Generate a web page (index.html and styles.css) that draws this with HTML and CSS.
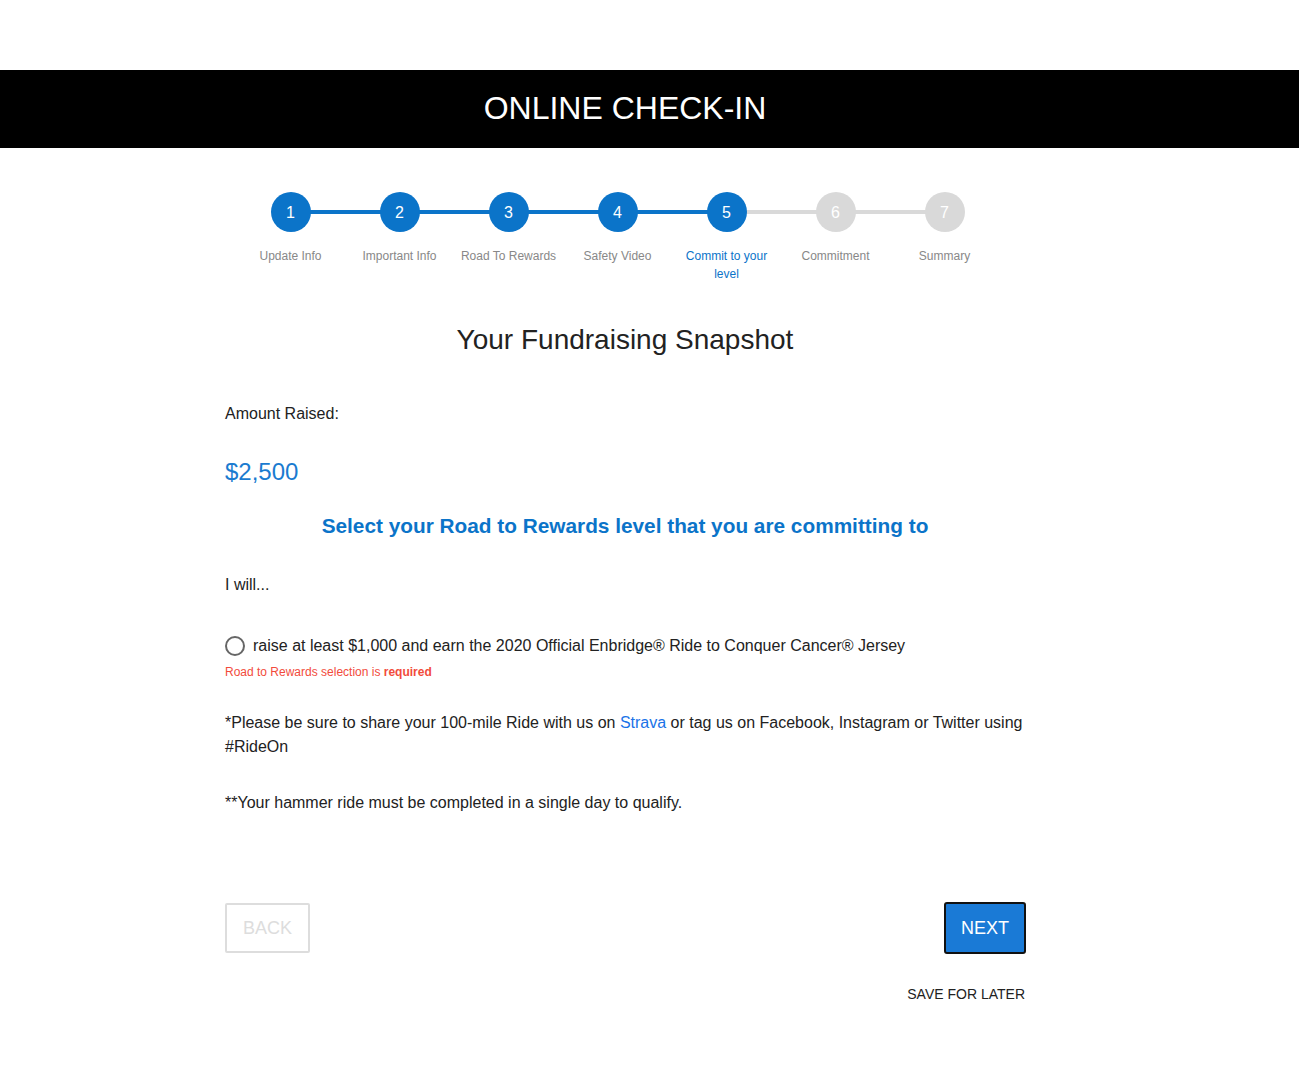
FILE: index.html
```html
<!DOCTYPE html>
<html lang="en">
<head>
<meta charset="utf-8">
<title>Online Check-In</title>
<link rel="stylesheet" href="styles.css">
</head>
<body>
<div class="topspace"></div>
<header class="banner">
  <div class="banner-inner"><h1 class="banner-title">ONLINE CHECK-IN</h1></div>
</header>
<main class="page">
  <div class="content">
    <ol class="steps">
      <li class="step done"><span class="dot">1</span><span class="label">Update Info</span></li>
      <li class="step done"><span class="dot">2</span><span class="label">Important Info</span></li>
      <li class="step done"><span class="dot">3</span><span class="label">Road To Rewards</span></li>
      <li class="step done"><span class="dot">4</span><span class="label">Safety Video</span></li>
      <li class="step current"><span class="dot">5</span><span class="label">Commit to your level</span></li>
      <li class="step todo"><span class="dot">6</span><span class="label">Commitment</span></li>
      <li class="step todo last"><span class="dot">7</span><span class="label">Summary</span></li>
    </ol>

    <h2 class="snapshot-title">Your Fundraising Snapshot</h2>

    <p class="amount-label">Amount Raised:</p>
    <p class="amount">$2,500</p>

    <h3 class="select-title">Select your Road to Rewards level that you are committing to</h3>

    <p class="will">I will...</p>

    <label class="radio-row">
      <span class="radio"></span>
      <span>raise at least $1,000 and earn the 2020 Official Enbridge® Ride to Conquer Cancer® Jersey</span>
    </label>
    <p class="error">Road to Rewards selection is <strong>required</strong></p>

    <p class="note">*Please be sure to share your 100-mile Ride with us on <a class="link" href="#">Strava</a> or tag us on Facebook, Instagram or Twitter using #RideOn</p>
    <p class="note note2">**Your hammer ride must be completed in a single day to qualify.</p>

    <div class="actions">
      <button class="btn back" type="button">BACK</button>
      <button class="btn next" type="button">NEXT</button>
    </div>
    <div class="save-row"><a class="save" href="#">SAVE FOR LATER</a></div>
  </div>
</main>
</body>
</html>
```

FILE: styles.css
```css
* { box-sizing: border-box; }
html, body { margin: 0; padding: 0; background: #fff; }
body {
  font-family: "Liberation Sans", Arial, Helvetica, sans-serif;
  color: #222;
  width: 1299px;
}
.topspace { height: 70px; }
.banner { background: #000; height: 78px; }
.banner-inner {
  width: 1250px;
  height: 78px;
  display: flex;
  align-items: center;
  justify-content: center;
}
.banner-title {
  margin: 0;
  color: #fff;
  font-weight: 400;
  font-size: 32px;
  line-height: 38px;
  padding-bottom: 2px;
}
.page { width: 1250px; }
.content {
  width: 800px;
  margin: 0 auto;
  padding-top: 44px;
}

/* steps */
.steps {
  list-style: none;
  margin: 0;
  padding: 0 0 0 11px;
  display: flex;
}
.step {
  width: 109px;
  position: relative;
  display: flex;
  flex-direction: column;
  align-items: center;
  text-align: center;
}
.step::after {
  content: "";
  position: absolute;
  top: 18px;
  left: 54px;
  width: 109px;
  height: 4px;
  background: #d9d9d9;
  z-index: 0;
}
.step.done::after { background: #0b74c9; }
.step.last::after { display: none; }
.dot {
  position: relative;
  z-index: 1;
  width: 40px;
  height: 40px;
  border-radius: 50%;
  background: #0b74c9;
  color: #fff;
  font-size: 16px;
  line-height: 41px;
}
.step.todo .dot { background: #d9d9d9; }
.label {
  margin-top: 15px;
  font-size: 12px;
  line-height: 18px;
  color: #888;
  width: 100px;
}
.step.current .label { color: #0b74c9; width: 90px; }

.snapshot-title {
  margin: 40px 0 0;
  text-align: center;
  font-weight: 400;
  font-size: 28px;
  line-height: 34px;
  color: #222;
}
.amount-label {
  margin: 47px 0 0;
  font-size: 16px;
  line-height: 20px;
}
.amount {
  margin: 33px 0 0;
  font-size: 24px;
  line-height: 30px;
  color: #1a7bd0;
}
.select-title {
  margin: 26px 0 0;
  text-align: center;
  font-size: 20.8px;
  line-height: 26px;
  font-weight: 700;
  color: #0b74c9;
}
.will {
  margin: 36px 0 0;
  font-size: 16px;
  line-height: 20px;
}
.radio-row {
  margin-top: 40px;
  display: flex;
  align-items: center;
  gap: 8px;
  font-size: 16px;
  line-height: 22px;
}
.radio {
  width: 20px;
  height: 20px;
  border: 2px solid #666;
  border-radius: 50%;
  flex: none;
}
.error {
  margin: 7px 0 0;
  font-size: 12px;
  line-height: 16px;
  color: #f24b3c;
}
.error strong { font-weight: 700; }
.note {
  margin: 31px 0 0;
  font-size: 16px;
  line-height: 24px;
}
.note2 { margin-top: 32px; }
.link { color: #1a73e8; text-decoration: none; }

.actions {
  margin-top: 87px;
  display: flex;
  justify-content: space-between;
  align-items: center;
}
.btn {
  font-family: inherit;
  font-size: 18px;
  cursor: pointer;
}
.back {
  width: 85px;
  height: 50px;
  background: #fff;
  border: 2px solid #ddd;
  border-radius: 2px;
  color: #ddd;
}
.next {
  width: 82px;
  height: 52px;
  background: #1a7ad6;
  color: #fff;
  border: 2px solid #111;
  border-radius: 3px;
  margin-right: -1px;
}
.save-row {
  margin-top: 32px;
  display: flex;
  justify-content: flex-end;
}
.save {
  font-size: 14px;
  color: #222;
  text-decoration: none;
}
```
